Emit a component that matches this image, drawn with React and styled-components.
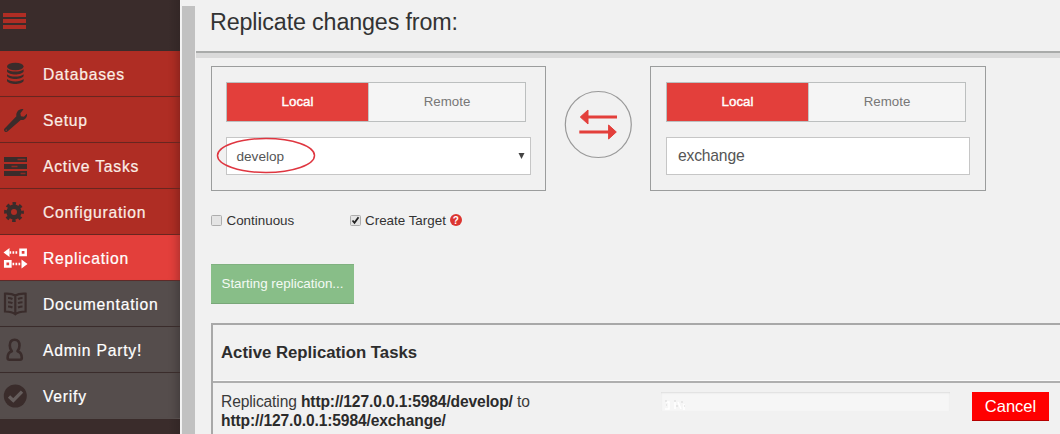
import React from "react";
import styled, { createGlobalStyle, css } from "styled-components";

const GlobalStyle = createGlobalStyle`
  *, *::before, *::after { box-sizing: border-box; }
  body { margin: 0; background: #f1f1f1; font-family: "Liberation Sans", Arial, sans-serif; overflow: hidden; }
`;

const Page = styled.div`
  display: flex;
  width: 1060px;
  height: 434px;
  overflow: hidden;
  background: #f1f1f1;
  color: #333;
`;

const Sidebar = styled.nav`
  flex: 0 0 181px;
  height: 434px;
  background: linear-gradient(90deg, transparent 168px, rgba(0, 0, 0, 0.12) 180px), #3a2c2b;
  border-right: 1px solid #f4f4f4;
`;

const MenuBar = styled.div`
  height: 51px;
  padding: 13px 0 0 3px;
  display: flex;
  flex-direction: column;
  gap: 2px;
`;

const MenuLine = styled.span`
  width: 23px;
  height: 4px;
  background: #af2d24;
`;

const tones = {
  red: css`background: #af2d24; border-color: #682620;`,
  active: css`background: #e33f3b; border-color: #5e2a28;`,
  gray: css`background: #554d4c; border-color: #3a2c2b;`,
};

const NavItem = styled.a`
  display: flex;
  align-items: center;
  height: 46px;
  border-bottom: 1.5px solid;
  color: ${(p) => (p.$tone === "active" ? "#fff" : "#3a2c2b")};
  ${(p) => tones[p.$tone]}
  box-shadow: inset -11px 0 8px -8px rgba(0, 0, 0, 0.22);
  &:last-child { border-bottom-color: #554d4c; }
`;

const NavIcon = styled.svg`
  width: 30px;
  height: 30px;
  flex: none;
`;

const NavLabel = styled.span`
  margin: 3px 0 0 13px;
  color: ${(p) => (p.$tone === "red" ? "#fbeee6" : "#fff")};
  font-size: 15.7px;
  letter-spacing: 0.77px;
  line-height: 20px;
  -webkit-text-stroke: 0.2px currentColor;
  white-space: nowrap;
`;

const ScrollGutter = styled.div`
  flex: 0 0 15px;
  padding: 6px 1px 0 1px;
  background: #f1f1f1;
`;

const ScrollThumb = styled.div`
  height: 428px;
  background: #c1c1c1;
`;

const Main = styled.main`
  flex: 1;
  min-width: 0;
`;

const Header = styled.header`
  height: 58px;
  padding: 7px 0 0 14px;
  border-bottom: 5px solid #dadada;
  box-shadow: inset 0 -2px 0 #a9abaa;
`;

const Title = styled.h1`
  margin: 0;
  font-size: 23.3px;
  letter-spacing: -0.15px;
  line-height: 30px;
  font-weight: 400;
  color: #333;
`;

const Content = styled.div`
  padding: 8px 0 0 15px;
`;

const Endpoints = styled.div`
  display: flex;
  align-items: flex-start;
`;

const Endpoint = styled.section`
  width: ${(p) => p.$width}px;
  height: 125px;
  padding: 15px 14px 15px ${(p) => p.$inset}px;
  border: 1px solid #9b9d9d;
`;

const Toggle = styled.div`
  display: flex;
  width: 300px;
  height: 40px;
  border: 1px solid #bcbfbf;
`;

const ToggleButton = styled.button`
  flex: 0 0 ${(p) => (p.$active ? "141px" : "157px")};
  padding: 0 0 2px;
  border: 0;
  border-left: ${(p) => (p.$active ? "0" : "1px solid #c6c6c6")};
  background: ${(p) => (p.$active ? "#e33f3b" : "#f5f5f5")};
  color: ${(p) => (p.$active ? "#fff" : "#777")};
  font: 13.3px "Liberation Sans", Arial, sans-serif;
  -webkit-text-stroke: ${(p) => (p.$active ? "0.4px #fff" : "0")};
`;

const Field = styled.div`
  display: flex;
  align-items: center;
  justify-content: space-between;
  width: ${(p) => (p.$select ? "305px" : "304px")};
  height: 38px;
  margin-top: 15px;
  padding: 0 5px 0 ${(p) => (p.$select ? "9.5px" : "11px")};
  border: 1px solid #c6c6c6;
  background: #fff;
  color: #555;
  font-size: ${(p) => (p.$select ? "13.6px" : "15.7px")};
  letter-spacing: ${(p) => (p.$select ? "0" : "-0.2px")};
  position: relative;
`;

const Caret = styled.svg`
  width: 7px;
  height: 8px;
`;

const Highlight = styled.svg`
  position: absolute;
  left: -11px;
  top: -1px;
  width: 100px;
  height: 38px;
`;

const SwapWrap = styled.div`
  width: 104px;
  height: 125px;
  display: flex;
  justify-content: center;
  padding-top: 24px;
`;

const Swap = styled.svg`
  width: 70px;
  height: 70px;
`;

const Options = styled.div`
  display: flex;
  align-items: center;
  height: 20px;
  margin-top: 19px;
  font-size: 13.4px;
`;

const Option = styled.label`
  display: flex;
  align-items: center;
  width: ${(p) => p.$width}px;
  white-space: nowrap;
`;

const Check = styled.svg`
  width: 11px;
  height: 11px;
  margin-right: 4.5px;
  flex: none;
`;

const Help = styled.span`
  display: inline-flex;
  align-items: center;
  justify-content: center;
  width: 12px;
  height: 12px;
  margin-left: 4px;
  border-radius: 50%;
  background: #dc3530;
  color: #fff;
  font-size: 10px;
  font-weight: 700;
`;

const StartButton = styled.button`
  display: block;
  width: 143px;
  height: 40px;
  margin-top: 34px;
  padding: 0;
  border: 0;
  border-bottom: 1px solid #79a779;
  box-shadow: inset 0 1px 0 #80b180;
  background: #88be88;
  color: #f4faf4;
  font: 13.4px "Liberation Sans", Arial, sans-serif;
`;

const Tasks = styled.section`
  height: 125px;
  margin-top: 19px;
  border: 2px solid #a8a8a8;
  border-width: 2px 0 0 2px;
`;

const TasksTitle = styled.h2`
  margin: 0;
  height: 58px;
  padding: 18px 0 0 8px;
  border-bottom: 2px solid #afafaf;
  box-shadow: inset 0 -1px #fafafa;
  font-size: 16.75px;
  line-height: 20px;
  color: #2d2d2d;
`;

const Task = styled.div`
  display: flex;
  align-items: flex-start;
  padding: 9px 0 0 8px;
`;

const TaskText = styled.p`
  width: 440px;
  margin: 0;
  padding-right: 100px;
  font-size: 15.6px;
  letter-spacing: -0.13px;
  line-height: 19px;
  color: #3a3a3a;
  b { color: #2b2b2b; }
`;

const Progress = styled.div`
  width: 289px;
  height: 19px;
  padding-left: 3px;
  background: #f6f6f6;
  box-shadow: inset 0 1px 2px rgba(0, 0, 0, 0.1);
`;

const Dots = styled.svg`
  display: block;
  width: 24px;
  height: 20px;
`;

const Cancel = styled.button`
  width: 77px;
  height: 29px;
  margin: 0 0 0 22px;
  padding: 0;
  border: 0;
  border-bottom: 1px solid #b50000;
  background: #f00;
  color: #fff;
  font: 16.5px "Liberation Sans", Arial, sans-serif;
`;

const icons = {
  database: (
    <g fill="currentColor">
      <ellipse cx="15.3" cy="7.500" rx="8.3" ry="3.8" />
      <path d="M7 10.200c3 3.200 13.600 3.200 16.600 0v2.200c-2 4-14.600 4-16.600 0z" />
      <path d="M7 15.200c3 3.200 13.600 3.200 16.600 0v1.800c-2 4-14.600 4-16.600 0z" />
      <path d="M7 20c3 3.200 13.600 3.200 16.600 0v2c-2 4-14.600 4-16.600 0z" />
    </g>
  ),
  wrench: (
    <path fill="currentColor" d="M23.500 4.300 20.400 8.200l.5 3 3 .5 3-3c.8 3.900-2.500 6.900-6.200 6.300L7.500 26.600c-1.800 1.400-4.400-.8-3.100-2.800L16.400 11.300c-.8-4 2.900-8.200 7.100-7zM6.200 24.400a.7.700 0 1 0 .1 1.400.7.700 0 0 0-.1-1.400z" />
  ),
  tasks: (
    <g>
      <path fill="currentColor" d="M4 6h23v5H4zM4 13h23v5H4zM4 20h23v5H4z" />
      <path fill="none" stroke="#8d2b24" strokeWidth="1.400" d="M17.500 8.500h8M11.500 15.500h6M20.500 22.500h5" />
    </g>
  ),
  gear: (
    <g fill="none" stroke="currentColor">
      <circle cx="14" cy="15" r="5.300" strokeWidth="4.600" />
      <circle cx="14" cy="15" r="8.200" strokeWidth="3.400" strokeDasharray="3.400 3.040" strokeDashoffset="1.700" />
    </g>
  ),
  replicate: (
    <g fill="none" stroke="currentColor">
      <path fill="currentColor" stroke="none" d="M3.500 9.500 9.500 5v9zM27.500 21 21.500 16.500v9z" />
      <path strokeWidth="2.600" strokeDasharray="1.700 1.300" d="M9.500 9.500h9M12.500 21h9" />
      <path strokeWidth="2.500" d="M20.500 6.800h5.200v5.200h-5.200zM5.200 18.300h5.200v5.200H5.200z" />
    </g>
  ),
  book: (
    <g fill="none" stroke="currentColor" strokeWidth="2.200">
      <path d="M15.300 6.500C12 4.500 8.500 4.500 5 4.700v17.800c4 0 7.500.2 10.300 2.800 2.800-2.600 6.300-2.800 10.300-2.800V4.700c-3.500-.2-7-.2-10.300 1.800zv18" />
      <path strokeWidth="2" d="M8 9c2 0 3 .3 4.500 1M8 13.200c2 0 3 .3 4.500 1M8 17.500c2 0 3 .3 4.500 1M22.500 9c-2 0-3 .3-4.500 1M22.500 13.200c-2 0-3 .3-4.500 1M22.500 17.500c-2 0-3 .3-4.500 1" />
    </g>
  ),
  person: (
    <path fill="none" stroke="currentColor" strokeWidth="2.600" strokeLinejoin="round" d="M14.600 4.700c-3.400 0-4.800 2.400-4.800 5.800 0 2.400.8 4.400 2 5.700-2.900.8-4.200 3.300-4.200 6.800 0 1.200.7 1.700 1.800 1.700h10.600c1.200 0 1.800-.5 1.800-1.700 0-3.500-1.400-6-4.300-6.800 1.200-1.300 2-3.300 2-5.700 0-3.400-1.500-5.800-4.900-5.800z" />
  ),
  verify: (
    <g>
      <circle cx="15.300" cy="15" r="11.500" fill="currentColor" />
      <path fill="none" stroke="#655d5c" strokeWidth="3.300" d="m9 15.500 4.300 4 8.700-8.800" />
    </g>
  ),
};

const navItems = [
  ["Databases", "database", "red"],
  ["Setup", "wrench", "red"],
  ["Active Tasks", "tasks", "red"],
  ["Configuration", "gear", "red"],
  ["Replication", "replicate", "active"],
  ["Documentation", "book", "gray"],
  ["Admin Party!", "person", "gray"],
  ["Verify", "verify", "gray"],
];

function LocationToggle() {
  return (
    <Toggle>
      <ToggleButton $active>Local</ToggleButton>
      <ToggleButton>Remote</ToggleButton>
    </Toggle>
  );
}

function Checkbox({ checked }) {
  return (
    <Check viewBox="0 0 11 11">
      <rect x=".5" y=".5" width="10" height="10" rx="1" fill="#e4e4e4" stroke="#adadad" />
      {checked && <path d="m2.500 5.500 2 2.300 4-5.600" fill="none" stroke="#222" strokeWidth="1.800" />}
    </Check>
  );
}

export default function App() {
  return (
    <Page>
      <GlobalStyle />
      <Sidebar>
        <MenuBar>
          <MenuLine />
          <MenuLine />
          <MenuLine />
        </MenuBar>
        <div>
          {navItems.map(([label, icon, tone]) => (
            <NavItem key={label} $tone={tone}>
              <NavIcon viewBox="0 0 30 30">{icons[icon]}</NavIcon>
              <NavLabel $tone={tone}>{label}</NavLabel>
            </NavItem>
          ))}
        </div>
      </Sidebar>
      <ScrollGutter>
        <ScrollThumb />
      </ScrollGutter>
      <Main>
        <Header>
          <Title>Replicate changes from:</Title>
        </Header>
        <Content>
          <Endpoints>
            <Endpoint $width={335} $inset={14}>
              <LocationToggle />
              <Field $select>
                <span>develop</span>
                <Caret viewBox="0 0 7 8">
                  <path d="M.5 1h6l-3 6z" fill="#444" />
                </Caret>
                <Highlight viewBox="0 0 100 38">
                  <ellipse cx="50" cy="18.500" rx="48.500" ry="17" fill="none" stroke="#df3640" strokeWidth="1.500" />
                </Highlight>
              </Field>
            </Endpoint>
            <SwapWrap>
              <Swap viewBox="0 0 70 70">
                <circle cx="35.300" cy="34.500" r="33" fill="none" stroke="#999" strokeWidth="1.200" />
                <g fill="#e33f3b" stroke="#e33f3b" strokeLinejoin="round">
                  <path d="m17.300 27 7.700-7v14zM53.300 42l-7.700-7v14z" />
                  <path strokeWidth="3" d="M24.500 27H54M16.300 42h30" />
                </g>
              </Swap>
            </SwapWrap>
            <Endpoint $width={336} $inset={15}>
              <LocationToggle />
              <Field>exchange</Field>
            </Endpoint>
          </Endpoints>
          <Options>
            <Option $width={138.5}>
              <Checkbox />
              Continuous
            </Option>
            <Option $width={120}>
              <Checkbox checked />
              Create Target
              <Help>?</Help>
            </Option>
          </Options>
          <StartButton>Starting replication...</StartButton>
          <Tasks>
            <TasksTitle>Active Replication Tasks</TasksTitle>
            <Task>
              <TaskText>
                Replicating <b>http://127.0.0.1:5984/develop/</b> to <b>http://127.0.0.1:5984/exchange/</b>
              </TaskText>
              <Progress>
                <Dots viewBox="0 0 24 20">
                  <path fill="none" stroke="#fff" strokeWidth="1.500" d="M2 10h3v7H1M11 10v7M14 10l3 7M20 12v6" />
                  <path fill="none" stroke="#d8d8d8" d="M1 9h2M10 9h2M17 10h2M2 13h1M12 14h2M20 14h1" />
                </Dots>
              </Progress>
              <Cancel>Cancel</Cancel>
            </Task>
          </Tasks>
        </Content>
      </Main>
    </Page>
  );
}
